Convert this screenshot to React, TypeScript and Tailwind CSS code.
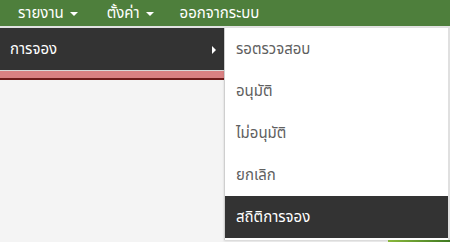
import React from 'react';

const subItems = ['รอตรวจสอบ', 'อนุมัติ', 'ไม่อนุมัติ', 'ยกเลิก', 'สถิติการจอง'];

const Caret = () => (
    <span className="inline-block ml-[6px] w-0 h-0 border-l-[4px] border-r-[4px] border-t-[4px] border-l-transparent border-r-transparent border-t-white"></span>
);

const App: React.FC = () => {
    return (
        <div className="relative w-[450px] h-[242px] overflow-hidden bg-[#f4f4f4] font-['Noto_Sans_Thai','Noto_Sans',sans-serif]">
            {/* top nav */}
            <div className="h-[26px] bg-[#4e7f3c] flex items-center pt-[1px] text-white text-[15px] leading-none">
                <div className="pl-[18px] flex items-center">รายงาน<Caret /></div>
                <div className="pl-[29px] flex items-center">ตั้งค่า<Caret /></div>
                <div className="pl-[26px]">ออกจากระบบ</div>
            </div>
            <div className="h-[2px] bg-[#e2e2e2]"></div>

            {/* left menu */}
            <div className="w-[224px]">
                <div className="h-[42px] bg-[#333333] flex items-center justify-between pl-[10px] pr-[8px] pt-[2px] text-white text-[15px]">
                    <span>การจอง</span>
                    <span className="w-0 h-0 border-t-[4px] border-b-[4px] border-l-[4px] border-t-transparent border-b-transparent border-l-white"></span>
                </div>
                <div className="h-[1px] bg-[#d8d8d8]"></div>
                <div className="h-[9px] bg-[#d98082] border-b-2 border-[#6e1b1b]"></div>
            </div>

            {/* submenu dropdown */}
            <div className="absolute left-[224px] top-[28px] w-[224px] h-[212px] bg-white border-l border-[#cfcfcf] shadow-[0_1px_2px_rgba(0,0,0,0.15)]">
                {subItems.map((item, i) => (
                    <div
                        key={i}
                        className={`h-[42px] flex items-center pl-[11px] pt-[3px] text-[15px] ${i === subItems.length - 1 ? 'bg-[#333333] text-white' : 'text-[#606060]'}`}
                    >
                        {item}
                    </div>
                ))}
            </div>
            <div className="absolute right-0 top-[28px] w-[2px] h-[214px] bg-[#e0e0e0]"></div>
            <div className="absolute right-0 bottom-0 w-[62px] h-[2px] bg-gradient-to-r from-[#8ab83c] to-[#3f7a22]"></div>
        </div>
    );
};

export default App;
